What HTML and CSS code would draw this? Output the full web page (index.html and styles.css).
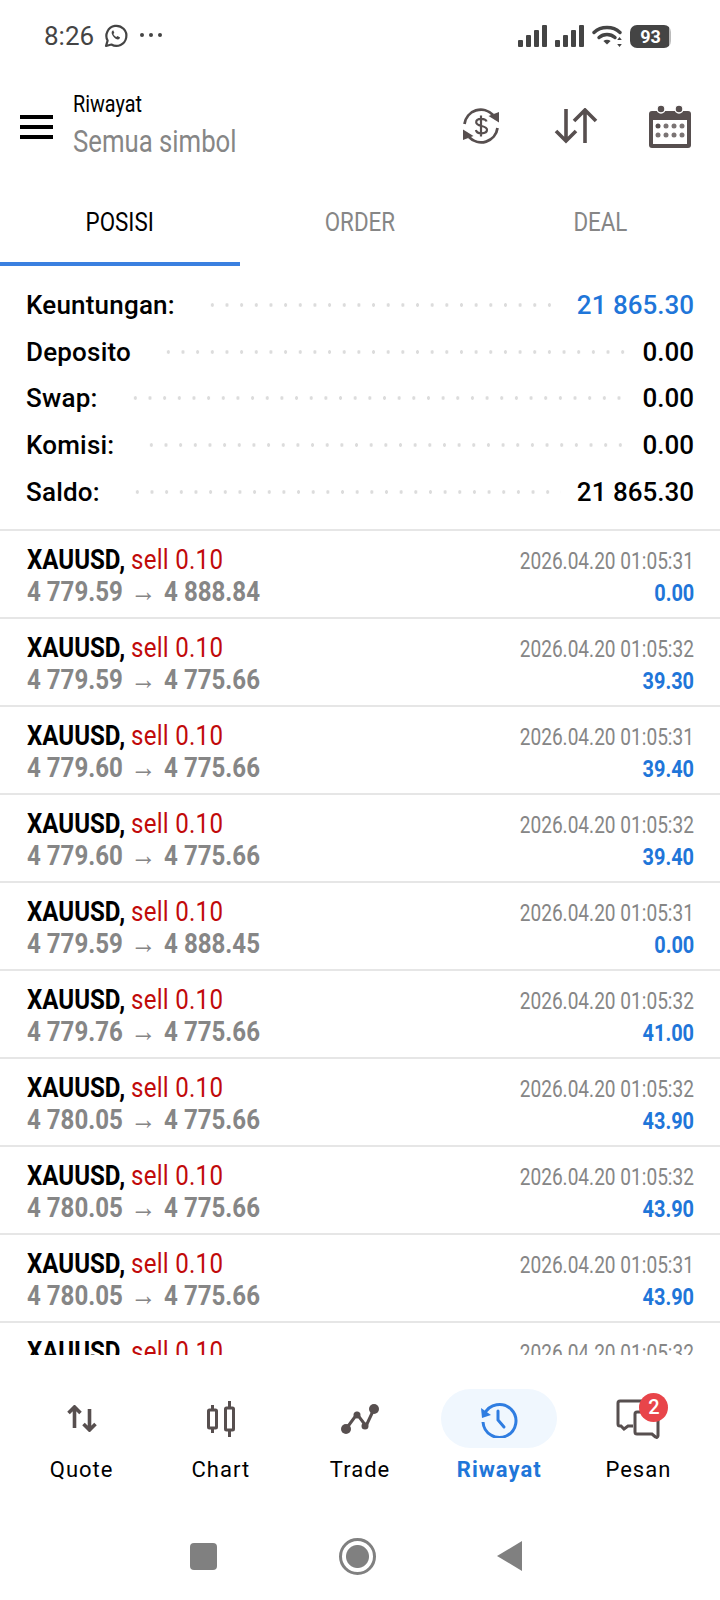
FILE: index.html

```html
<!DOCTYPE html>
<html lang="id">
<head>
    <meta charset="UTF-8">
    <meta name="viewport" content="width=device-width, initial-scale=1.0">
    <title>Riwayat</title>
    <link rel="stylesheet" href="styles.css">
</head>
<body>
    <div class="status-bar">
        <span class="clock">8:26</span>
        <svg class="wa-icon" width="26" height="26" viewBox="0 0 26 26" fill="none" stroke="#444" stroke-width="2.2">
            <path d="M3 23l1.6-5.4A10 10 0 1 1 8.400 21.500z" stroke-linejoin="round"/>
            <path d="M9.500 7.800c-1.500 1.200-1 3.400.8 5.600 1.900 2.300 4.300 3.700 6 2.600l.8-1.500-2.600-1.500-1.100 1c-1.300-.5-2.500-1.900-3-3.100l.9-1.100-1.100-2.600z" fill="#444" stroke="none"/>
        </svg>
        <span class="status-dots"><i></i><i></i><i></i></span>
        <span class="status-right">
            <svg width="29" height="22" viewBox="0 0 29 22" fill="#444"><rect x="0" y="15" width="5" height="7" rx="1"/><rect x="8" y="10" width="5" height="12" rx="1"/><rect x="16" y="5" width="5" height="17" rx="1"/><rect x="24" y="0" width="5" height="22" rx="1"/></svg>
            <svg width="29" height="22" viewBox="0 0 29 22" fill="#444"><rect x="0" y="15" width="5" height="7" rx="1"/><rect x="8" y="10" width="5" height="12" rx="1"/><rect x="16" y="5" width="5" height="17" rx="1"/><rect x="24" y="0" width="5" height="22" rx="1"/></svg>
            <svg width="31" height="24" viewBox="0 0 31 24" fill="none" stroke="#444" stroke-width="3.400" stroke-linecap="round">
                <path d="M2 8.500c7-6.600 19-6.600 26 0"/>
                <path d="M7 13.500c4.500-4 11.500-4 16 0"/>
                <path d="M15 20.500l-3.600-3.500c2-1.600 5.200-1.600 7.200 0z" fill="#444" stroke="none"/>
                <path d="M27.500 13l2.300 3h-4.600zM27.500 23l2.300-3h-4.600z" fill="#444" stroke="none"/>
            </svg>
            <span class="battery"><b>93</b></span>
        </span>
    </div>

    <header class="app-bar">
        <div class="burger"><i></i><i></i><i></i></div>
        <div class="app-title">
            <div class="title-small"><span class="narrow">Riwayat</span></div>
            <div class="title-big"><span class="narrow">Semua simbol</span></div>
        </div>
        <div class="app-actions">
            <svg width="38" height="38" viewBox="0 0 38 38" fill="none" stroke="#574f4f" stroke-width="2.800">
                <path d="M2.500 17A16.500 16.500 0 0 1 31 8"/>
                <path d="M35.500 21A16.500 16.500 0 0 1 7 30"/>
                <path d="M37 5v10.500L26.500 9z" fill="#574f4f" stroke="none"/>
                <path d="M1 33V22.500L11.500 29z" fill="#574f4f" stroke="none"/>
                <path d="M24.500 14.500c-.4-1.800-2.500-2.700-5.300-2.700-2.900 0-5 1.200-5 3.500 0 4.700 10.800 2.800 10.800 7.500 0 2.400-2.300 3.500-5.500 3.500-3 0-5.200-1.100-5.600-3.300M19 8.500v21" stroke-width="2.200"/>
            </svg>
            <svg class="icon-arrows" width="44" height="36" viewBox="0 0 44 36" fill="none" stroke="#574f4f" stroke-width="3.600">
                <path d="M12 1v32M2 23l10 10 10-10"/>
                <path d="M31 35V3M20 13L31 2l11 11"/>
            </svg>
            <svg width="44" height="44" viewBox="0 0 44 44">
                <rect x="1" y="7" width="42" height="37" rx="3" fill="#574f4f"/>
                <circle cx="13" cy="5" r="4" fill="#574f4f" stroke="#fff" stroke-width="1.500"/>
                <circle cx="31" cy="5" r="4" fill="#574f4f" stroke="#fff" stroke-width="1.500"/>
                <rect x="5" y="16" width="34" height="24" fill="#fff"/>
                <g fill="#7a7373">
                    <circle cx="10" cy="22" r="2.500" fill="#574f4f"/><circle cx="18" cy="22" r="2.500"/><circle cx="26" cy="22" r="2.500"/><circle cx="34" cy="22" r="2.500"/>
                    <circle cx="10" cy="31" r="2.500"/><circle cx="18" cy="31" r="2.500"/><circle cx="26" cy="31" r="2.500"/><circle cx="34" cy="31" r="2.500"/>
                </g>
            </svg>
        </div>
    </header>

    <nav class="tabs">
        <div class="tab tab-active"><span class="narrow">POSISI</span></div>
        <div class="tab"><span class="narrow">ORDER</span></div>
        <div class="tab"><span class="narrow">DEAL</span></div>
    </nav>

    <section class="summary">
        <div class="sum-row"><span>Keuntungan:</span><i class="dots dots-wide"></i><span class="sum-value blue">21 865.30</span></div>
        <div class="sum-row"><span>Deposito</span><i class="dots"></i><span class="sum-value">0.00</span></div>
        <div class="sum-row"><span>Swap:</span><i class="dots"></i><span class="sum-value">0.00</span></div>
        <div class="sum-row"><span>Komisi:</span><i class="dots"></i><span class="sum-value">0.00</span></div>
        <div class="sum-row"><span>Saldo:</span><i class="dots dots-wide"></i><span class="sum-value">21 865.30</span></div>
    </section>

    <main class="deals">
        <div class="deal">
            <div class="deal-left">
                <div class="deal-name"><span class="narrow"><b>XAUUSD,</b> <em>sell 0.10</em></span></div>
                <div class="deal-price"><span class="narrow">4 779.59 <u>→</u> 4 888.84</span></div>
            </div>
            <div class="deal-right">
                <div class="deal-time"><span class="narrow-r">2026.04.20 01:05:31</span></div>
                <div class="deal-profit"><span class="narrow-r">0.00</span></div>
            </div>
        </div>
        <div class="deal">
            <div class="deal-left">
                <div class="deal-name"><span class="narrow"><b>XAUUSD,</b> <em>sell 0.10</em></span></div>
                <div class="deal-price"><span class="narrow">4 779.59 <u>→</u> 4 775.66</span></div>
            </div>
            <div class="deal-right">
                <div class="deal-time"><span class="narrow-r">2026.04.20 01:05:32</span></div>
                <div class="deal-profit"><span class="narrow-r">39.30</span></div>
            </div>
        </div>
        <div class="deal">
            <div class="deal-left">
                <div class="deal-name"><span class="narrow"><b>XAUUSD,</b> <em>sell 0.10</em></span></div>
                <div class="deal-price"><span class="narrow">4 779.60 <u>→</u> 4 775.66</span></div>
            </div>
            <div class="deal-right">
                <div class="deal-time"><span class="narrow-r">2026.04.20 01:05:31</span></div>
                <div class="deal-profit"><span class="narrow-r">39.40</span></div>
            </div>
        </div>
        <div class="deal">
            <div class="deal-left">
                <div class="deal-name"><span class="narrow"><b>XAUUSD,</b> <em>sell 0.10</em></span></div>
                <div class="deal-price"><span class="narrow">4 779.60 <u>→</u> 4 775.66</span></div>
            </div>
            <div class="deal-right">
                <div class="deal-time"><span class="narrow-r">2026.04.20 01:05:32</span></div>
                <div class="deal-profit"><span class="narrow-r">39.40</span></div>
            </div>
        </div>
        <div class="deal">
            <div class="deal-left">
                <div class="deal-name"><span class="narrow"><b>XAUUSD,</b> <em>sell 0.10</em></span></div>
                <div class="deal-price"><span class="narrow">4 779.59 <u>→</u> 4 888.45</span></div>
            </div>
            <div class="deal-right">
                <div class="deal-time"><span class="narrow-r">2026.04.20 01:05:31</span></div>
                <div class="deal-profit"><span class="narrow-r">0.00</span></div>
            </div>
        </div>
        <div class="deal">
            <div class="deal-left">
                <div class="deal-name"><span class="narrow"><b>XAUUSD,</b> <em>sell 0.10</em></span></div>
                <div class="deal-price"><span class="narrow">4 779.76 <u>→</u> 4 775.66</span></div>
            </div>
            <div class="deal-right">
                <div class="deal-time"><span class="narrow-r">2026.04.20 01:05:32</span></div>
                <div class="deal-profit"><span class="narrow-r">41.00</span></div>
            </div>
        </div>
        <div class="deal">
            <div class="deal-left">
                <div class="deal-name"><span class="narrow"><b>XAUUSD,</b> <em>sell 0.10</em></span></div>
                <div class="deal-price"><span class="narrow">4 780.05 <u>→</u> 4 775.66</span></div>
            </div>
            <div class="deal-right">
                <div class="deal-time"><span class="narrow-r">2026.04.20 01:05:32</span></div>
                <div class="deal-profit"><span class="narrow-r">43.90</span></div>
            </div>
        </div>
        <div class="deal">
            <div class="deal-left">
                <div class="deal-name"><span class="narrow"><b>XAUUSD,</b> <em>sell 0.10</em></span></div>
                <div class="deal-price"><span class="narrow">4 780.05 <u>→</u> 4 775.66</span></div>
            </div>
            <div class="deal-right">
                <div class="deal-time"><span class="narrow-r">2026.04.20 01:05:32</span></div>
                <div class="deal-profit"><span class="narrow-r">43.90</span></div>
            </div>
        </div>
        <div class="deal">
            <div class="deal-left">
                <div class="deal-name"><span class="narrow"><b>XAUUSD,</b> <em>sell 0.10</em></span></div>
                <div class="deal-price"><span class="narrow">4 780.05 <u>→</u> 4 775.66</span></div>
            </div>
            <div class="deal-right">
                <div class="deal-time"><span class="narrow-r">2026.04.20 01:05:31</span></div>
                <div class="deal-profit"><span class="narrow-r">43.90</span></div>
            </div>
        </div>
        <div class="deal">
            <div class="deal-left">
                <div class="deal-name"><span class="narrow"><b>XAUUSD,</b> <em>sell 0.10</em></span></div>
            </div>
            <div class="deal-right">
                <div class="deal-time"><span class="narrow-r">2026.04.20 01:05:32</span></div>
            </div>
        </div>
    </main>

    <nav class="bottom-nav">
        <div class="nav-item">
            <div class="nav-icon">
                <svg width="30" height="27" viewBox="0 0 30 27" fill="none" stroke="#574f4f" stroke-width="3.600">
                    <path d="M7.500 23V2M1.500 8l6-6 6 6"/>
                    <path d="M22.500 4v21M16.500 19l6 6 6-6"/>
                </svg>
            </div>
            <span>Quote</span>
        </div>
        <div class="nav-item">
            <div class="nav-icon">
                <svg width="28" height="36" viewBox="0 0 28 36" fill="none" stroke="#574f4f" stroke-width="3">
                    <rect x="1.500" y="9" width="8" height="18" rx="1"/>
                    <rect x="18.500" y="7" width="8" height="22" rx="1"/>
                    <path d="M5.500 4v5M5.500 27v5M22.500 0v7M22.500 29v7"/>
                </svg>
            </div>
            <span>Chart</span>
        </div>
        <div class="nav-item">
            <div class="nav-icon">
                <svg width="40" height="32" viewBox="0 0 40 32" fill="none" stroke="#574f4f" stroke-width="3">
                    <path d="M6 26L17 11l9 12L34 6"/>
                    <circle cx="6" cy="26" r="5" fill="#574f4f" stroke="none"/>
                    <circle cx="17" cy="12" r="3.500" fill="#574f4f" stroke="none"/>
                    <circle cx="25" cy="23" r="3.500" fill="#574f4f" stroke="none"/>
                    <circle cx="34" cy="6" r="5" fill="#574f4f" stroke="none"/>
                </svg>
            </div>
            <span>Trade</span>
        </div>
        <div class="nav-item nav-active">
            <div class="nav-icon">
                <svg width="38" height="38" viewBox="0 0 38 38" fill="none" stroke="#2f7de1" stroke-width="3">
                    <path d="M4.500 14A16.500 16.500 0 1 1 3 22"/>
                    <path d="M1 8l1 10 9-3z" fill="#2f7de1" stroke="none"/>
                    <path d="M18 11v9l6 7" stroke-linecap="round"/>
                </svg>
            </div>
            <span>Riwayat</span>
        </div>
        <div class="nav-item">
            <div class="nav-icon">
                <svg width="44" height="40" viewBox="0 0 44 40" fill="none" stroke="#574f4f" stroke-width="3">
                    <path d="M17 27h-5l-4 3-3-3H4a2 2 0 0 1-2-2V4a2 2 0 0 1 2-2h26a2 2 0 0 1 2 2v8"/>
                    <path d="M21 13h19a2 2 0 0 1 2 2v22a1.500 1.500 0 0 1-2.500 1l-3.500-3H21a2 2 0 0 1-2-2V15a2 2 0 0 1 2-2z"/>
                </svg>
                <span class="badge">2</span>
            </div>
            <span>Pesan</span>
        </div>
    </nav>

    <div class="sys-nav">
        <i class="sys-square"></i>
        <i class="sys-circle"></i>
        <i class="sys-back"></i>
    </div>
</body>
</html>
```

FILE: styles.css

```css
* {
    box-sizing: border-box;
}

html, body {
    margin: 0;
    padding: 0;
}

body {
    width: 720px;
    height: 1600px;
    overflow: hidden;
    display: flex;
    flex-direction: column;
    font-family: 'Roboto', sans-serif;
    background-color: white;
    color: black;
}

/* Roboto Condensed is not available, so the text gets squeezed */
.narrow, .narrow-r {
    display: inline-block;
    white-space: nowrap;
    transform: scaleX(0.86);
    transform-origin: left center;
}

.narrow-r {
    transform: scaleX(0.83);
    transform-origin: right center;
}

.status-bar {
    height: 72px;
    display: flex;
    align-items: center;
    padding: 0 49px 0 44px;
    color: #444;
}

.clock {
    font-size: 26px;
    margin-right: 9px;
}

.status-dots {
    display: flex;
    gap: 5px;
    margin-left: 11px;
    margin-bottom: 2px;
}

.status-dots i {
    width: 4px;
    height: 4px;
    border-radius: 50%;
    background-color: #444;
}

.status-right {
    margin-left: auto;
    display: flex;
    align-items: center;
    gap: 8px;
}

.battery {
    width: 41px;
    height: 23px;
    margin-left: -1px;
    border-radius: 7px;
    background: linear-gradient(90deg, #444 94%, #bbb 94%);
    color: white;
    font-size: 18px;
    text-align: center;
    line-height: 23px;
}

.app-bar {
    height: 108px;
    display: flex;
    align-items: center;
    padding: 0 28px 0 20px;
}

.burger {
    width: 33px;
    display: flex;
    flex-direction: column;
    gap: 6px;
    margin-right: 20px;
    margin-top: 2px;
}

.burger i {
    height: 4px;
    background-color: black;
}

.title-small {
    font-size: 23px;
    line-height: 26px;
    margin-bottom: 6px;
}

.title-big {
    font-size: 31px;
    line-height: 36px;
    color: #868686;
}

.title-big .narrow {
    transform: scaleX(0.83);
}

.app-actions {
    margin-left: auto;
    display: flex;
    align-items: center;
    gap: 52px;
}

.icon-arrows {
    margin: 0 -2px 0 2px;
}

.tabs {
    height: 86px;
    display: flex;
}

.tab {
    width: 240px;
    text-align: center;
    font-size: 26px;
    line-height: 84px;
    color: #868686;
}

.tab-active {
    color: black;
    border-bottom: 4px solid #3a80e0;
}

.tab .narrow {
    transform-origin: center;
}

.summary {
    height: 265px;
    padding: 16px 26px 0 26px;
    border-bottom: 2px solid #e6e6e6;
}

.sum-row {
    height: 46.6px;
    display: flex;
    align-items: center;
    font-size: 26px;
    font-weight: 500;
    letter-spacing: 0.2px;
}

.sum-value {
    letter-spacing: 0;
}

.dots {
    flex: 1;
    height: 6px;
    margin: 0 11px 0 30px;
    background-image: radial-gradient(circle, #dcdcdc 1.5px, transparent 2px);
    background-size: 14.67px 6px;
}

.dots-wide {
    margin-right: 16px;
}

.blue {
    color: #1f76d9;
}

.deals {
    flex: 1;
    min-height: 0;
    overflow: hidden;
}

.deal {
    height: 88px;
    padding: 11px 26px 0 27px;
    display: flex;
    justify-content: space-between;
    border-bottom: 2px solid #e6e6e6;
}

.deal-name {
    font-size: 28px;
    line-height: 36px;
}

.deal-name b {
    font-weight: 700;
}

.deal-name em {
    font-style: normal;
    letter-spacing: 0.3px;
    color: #c10a0a;
}

.deal-price {
    font-size: 28px;
    line-height: 28px;
    font-weight: 700;
    color: #868686;
}

.deal-price u {
    text-decoration: none;
    font-weight: 400;
    font-size: 30px;
    line-height: 0;
    margin: 0 2px;
}

.deal-right {
    padding-top: 2px;
    text-align: right;
}

.deal-time {
    font-size: 23px;
    line-height: 36px;
    color: #868686;
}

.deal-profit {
    font-size: 24px;
    line-height: 27px;
    font-weight: 700;
    color: #1f76d9;
}

.bottom-nav {
    height: 159px;
    padding: 34px 12px 0;
    display: flex;
    background-color: white;
}

.nav-item {
    flex: 1;
    display: flex;
    flex-direction: column;
    align-items: center;
    font-size: 22px;
    letter-spacing: 1px;
}

.nav-icon {
    position: relative;
    width: 116px;
    height: 59px;
    display: flex;
    align-items: center;
    justify-content: center;
    border-radius: 30px;
    margin-bottom: 9px;
}

.nav-active {
    color: #1f76d9;
    font-weight: 700;
}

.nav-active .nav-icon {
    background-color: #f0f7fe;
}

.badge {
    position: absolute;
    top: 4px;
    right: 28px;
    width: 29px;
    height: 29px;
    border-radius: 50%;
    background-color: #e8454a;
    color: white;
    font-size: 20px;
    font-weight: 500;
    letter-spacing: 0;
    text-align: center;
    line-height: 29px;
}

.sys-nav {
    height: 88px;
    display: flex;
    align-items: center;
    padding: 0 0 0 190px;
    margin-top: -2px;
}

.sys-square {
    width: 27px;
    height: 27px;
    border-radius: 4px;
    background-color: #808080;
}

.sys-circle {
    width: 37px;
    height: 37px;
    margin-left: 122px;
    border-radius: 50%;
    border: 3px solid #808080;
    background: radial-gradient(circle, #808080 11px, white 12px);
}

.sys-back {
    width: 0;
    height: 0;
    margin-left: 121px;
    border-style: solid;
    border-width: 15px 25px 15px 0;
    border-color: transparent #808080 transparent transparent;
}
```
